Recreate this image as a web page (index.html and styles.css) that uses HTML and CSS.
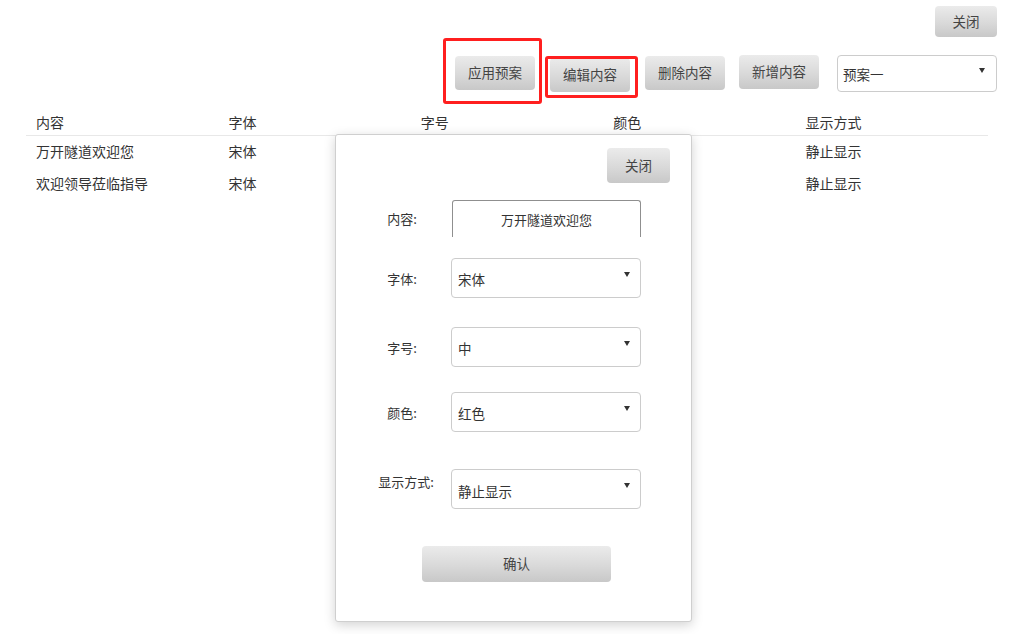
FILE: index.html
```html
<!DOCTYPE html>
<html lang="zh">
<head>
<meta charset="utf-8">
<title>预案管理</title>
<link rel="stylesheet" href="styles.css">
</head>
<body>
<div class="page">
  <div class="topbar">
    <button class="btn btn-close">关闭</button>
  </div>
  <div class="toolbar">
    <button class="btn btn-tool">应用预案</button>
    <button class="btn btn-tool btn-low">编辑内容</button>
    <button class="btn btn-tool">删除内容</button>
    <button class="btn btn-tool btn-high">新增内容</button>
    <div class="select select-plan"><span>预案一</span><i class="arrow arrow-plan"></i></div>
  </div>
  <table class="grid">
    <thead>
      <tr><th>内容</th><th>字体</th><th>字号</th><th>颜色</th><th>显示方式</th></tr>
    </thead>
    <tbody>
      <tr><td>万开隧道欢迎您</td><td>宋体</td><td></td><td></td><td>静止显示</td></tr>
      <tr><td>欢迎领导莅临指导</td><td>宋体</td><td></td><td></td><td>静止显示</td></tr>
    </tbody>
  </table>

  <div class="mark mark-apply"></div>
  <div class="mark mark-edit"></div>

  <div class="modal">
    <div class="modal-head">
      <button class="btn btn-modal-close">关闭</button>
    </div>
    <div class="field field-content">
      <label class="field-label">内容:</label>
      <div class="text-input">万开隧道欢迎您</div>
    </div>
    <div class="field field-font">
      <label class="field-label">字体:</label>
      <div class="select select-field"><span>宋体</span><i class="arrow"></i></div>
    </div>
    <div class="field field-size">
      <label class="field-label">字号:</label>
      <div class="select select-field"><span>中</span><i class="arrow"></i></div>
    </div>
    <div class="field field-color">
      <label class="field-label">颜色:</label>
      <div class="select select-field"><span>红色</span><i class="arrow"></i></div>
    </div>
    <div class="field field-mode">
      <label class="field-label label-raised">显示方式:</label>
      <div class="select select-field"><span class="text-low">静止显示</span><i class="arrow"></i></div>
    </div>
    <div class="modal-foot">
      <button class="btn btn-confirm">确认</button>
    </div>
  </div>
</div>
</body>
</html>
```

FILE: styles.css
```css
* { box-sizing: border-box; }

html, body {
  margin: 0;
  padding: 0;
  background: #ffffff;
}

body {
  font-family: "Noto Sans CJK SC", "Noto Sans", sans-serif;
  color: #333333;
  font-size: 14px;
}

.page {
  position: relative;
  width: 1028px;
  height: 634px;
  overflow: hidden;
}

.btn {
  font-family: inherit;
  font-size: 13.5px;
  color: #444444;
  border: none;
  border-radius: 4px;
  background: linear-gradient(to bottom, #ebebeb 0%, #d9d9d9 55%, #c8c8c8 100%);
  padding: 0;
  cursor: pointer;
  line-height: 1;
}

.topbar {
  display: flex;
  justify-content: flex-end;
  padding: 6px 31px 0 0;
}

.btn-close {
  width: 62px;
  height: 31px;
}

.toolbar {
  display: flex;
  justify-content: flex-end;
  align-items: flex-start;
  margin-top: 18px;
  padding-right: 31px;
}

.btn-tool {
  width: 80px;
  height: 34px;
  margin-top: 1px;
  margin-right: 15px;
}

.btn-low { margin-top: 3px; }
.btn-high { margin-top: 0; margin-right: 18px; }
.toolbar .btn-tool:nth-child(3) { margin-right: 14px; }

.select {
  display: flex;
  justify-content: space-between;
  align-items: center;
  border: 1px solid #cccccc;
  border-radius: 4px;
  background: #ffffff;
  color: #333333;
  font-size: 13.5px;
}

.select-plan {
  width: 160px;
  height: 37px;
  padding: 0 11px 0 5px;
}

.arrow {
  display: block;
  width: 0;
  height: 0;
  border-left: 3px solid transparent;
  border-right: 3px solid transparent;
  border-top: 5px solid #333333;
  align-self: flex-start;
  margin-top: 13px;
}

.arrow-plan { margin-top: 12px; }

.grid {
  margin: 18px 0 0 26px;
  width: 962px;
  border-collapse: collapse;
  table-layout: fixed;
}

.grid th,
.grid td {
  text-align: left;
  font-weight: normal;
  padding: 0 0 0 10px;
  color: #333333;
  font-size: 14px;
}

.grid th {
  height: 25px;
  border-bottom: 1px solid #e8e8e8;
  vertical-align: middle;
  padding-bottom: 1px;
}

.grid td {
  height: 32px;
  vertical-align: middle;
}

.mark {
  position: absolute;
  border: 3px solid #ff1f1f;
  border-radius: 3px;
}

.mark-apply {
  left: 443px;
  top: 38px;
  width: 99px;
  height: 66px;
}

.mark-edit {
  left: 545px;
  top: 56px;
  width: 93px;
  height: 42px;
}

.modal {
  position: absolute;
  left: 335px;
  top: 134px;
  width: 357px;
  height: 488px;
  background: #ffffff;
  border: 1px solid #cfcfcf;
  border-radius: 3px;
  box-shadow: 0 3px 12px rgba(0, 0, 0, 0.18);
  display: flex;
  flex-direction: column;
}

.modal-head {
  display: flex;
  justify-content: flex-end;
  padding: 13px 21px 0 0;
}

.btn-modal-close {
  width: 63px;
  height: 35px;
}

.field {
  display: flex;
  align-items: center;
  padding-left: 28px;
}

.field-content { margin-top: 17px; }
.field-font { margin-top: 21px; }
.field-size { margin-top: 29px; }
.field-color { margin-top: 25px; }
.field-mode { margin-top: 37px; }

.field-label {
  width: 76px;
  text-align: center;
  font-size: 13px;
  color: #333333;
  margin-right: 11px;
}

.label-raised {
  align-self: flex-start;
  margin-top: 3px;
  padding-left: 8px;
}

.text-input {
  width: 189px;
  height: 37px;
  margin-left: 1px;
  border: 1px solid #8f8f8f;
  border-bottom: none;
  border-radius: 3px 3px 0 0;
  display: flex;
  align-items: center;
  justify-content: center;
  font-size: 13px;
  color: #333333;
}

.select-field {
  width: 190px;
  height: 40px;
  padding: 0 10px 0 6px;
}

.select-field span { padding-top: 1px; }
.select-field .text-low { padding-top: 3px; }

.modal-foot {
  display: flex;
  justify-content: center;
  margin-top: 37px;
  padding-left: 6px;
}

.btn-confirm {
  width: 189px;
  height: 36px;
}
```
